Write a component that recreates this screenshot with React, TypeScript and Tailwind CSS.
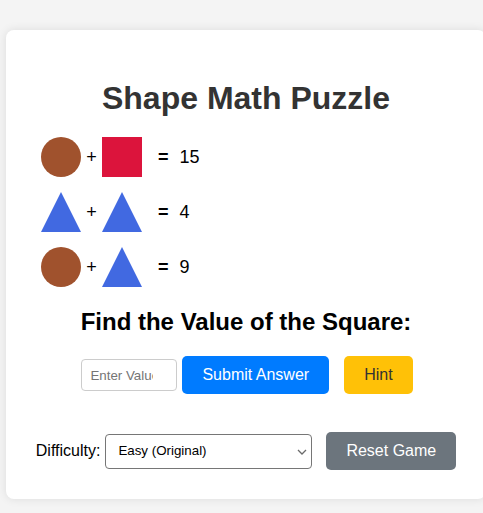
import React from 'react'

type Shape = 'circle' | 'square' | 'triangle'

const ShapeIcon = ({ shape }: { shape: Shape }): JSX.Element => {
  if (shape === 'circle') return <div className="w-10 h-10 rounded-full bg-[#a0522d]" />
  if (shape === 'square') return <div className="w-10 h-10 bg-[#dc143c]" />
  return (
    <svg width="40" height="40" viewBox="0 0 40 40" className="block">
      <polygon points="20,0 40,40 0,40" fill="#4169e1" />
    </svg>
  )
}

const equations: { a: Shape; b: Shape; result: number }[] = [
  { a: 'circle', b: 'square', result: 15 },
  { a: 'triangle', b: 'triangle', result: 4 },
  { a: 'circle', b: 'triangle', result: 9 }
]

const App = (): JSX.Element => {
  return (
    <div className="w-[483px] h-[513px] overflow-hidden bg-[#f4f4f4] pt-[30px] pl-[6px] font-['Liberation_Sans',Arial,sans-serif]">
      <div className="w-[480px] h-[469px] bg-white rounded-[8px] shadow-[0_0_10px_rgba(0,0,0,0.1)] pt-[50px]">
        <h1 className="text-[32px] leading-[37px] font-bold text-[#333] text-center">Shape Math Puzzle</h1>

        <div className="mt-[20px] pl-[35px] flex flex-col gap-[15px]">
          {equations.map((eq, i) => (
            <div key={i} className="flex items-center h-10 text-[18px] leading-[20px] text-black">
              <ShapeIcon shape={eq.a} />
              <span className="w-[21px] text-center">+</span>
              <ShapeIcon shape={eq.b} />
              <span className="ml-[16px] font-bold">=</span>
              <span className="ml-[11px]">{eq.result}</span>
            </div>
          ))}
        </div>

        <h2 className="mt-[21px] text-[24px] leading-[28px] font-bold text-black text-center">
          Find the Value of the Square:
        </h2>

        <div className="mt-[20px] pl-[2px] flex items-center justify-center">
          <input
            type="number"
            placeholder="Enter Value"
            className="w-[96px] h-[32px] border border-[#ccc] rounded-[4px] px-[8px] text-[13.33px] placeholder:text-[#757575] outline-none"
          />
          <button className="ml-[5px] h-[38px] px-[20px] bg-[#007bff] text-white text-[16px] rounded-[5px]">
            Submit Answer
          </button>
          <button className="ml-[15px] h-[38px] px-[20px] bg-[#ffc107] text-[#333] text-[16px] rounded-[5px]">
            Hint
          </button>
        </div>

        <div className="mt-[38px] flex items-center justify-center">
          <label className="text-[16px] text-black">Difficulty:</label>
          <div className="relative ml-[5px]">
            <select className="appearance-none w-[207px] h-[35px] border border-[#767676] rounded-[4px] pl-[12px] pr-[20px] text-[13.33px] text-black bg-white outline-none">
              <option>Easy (Original)</option>
              <option>Medium</option>
              <option>Hard</option>
            </select>
            <svg
              width="10"
              height="6"
              viewBox="0 0 10 6"
              className="absolute right-[5px] top-[15px] pointer-events-none"
            >
              <path d="M1 1 L5 5 L9 1" fill="none" stroke="#6b6b6b" strokeWidth="1.3" />
            </svg>
          </div>
          <button className="ml-[14px] h-[38px] px-[20px] bg-[#6c757d] text-white text-[16px] rounded-[5px]">
            Reset Game
          </button>
        </div>
      </div>
    </div>
  )
}

export default App
